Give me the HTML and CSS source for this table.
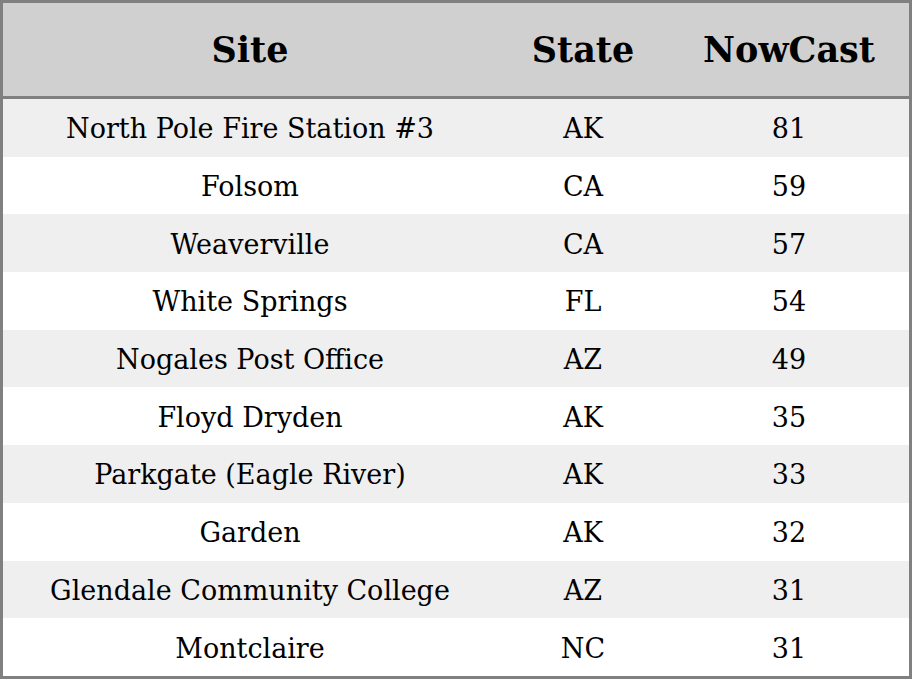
FILE: index.html
```html
<!DOCTYPE html>
<html>
<head>
<meta charset="utf-8">
<link rel="stylesheet" href="styles.css">
</head>
<body>
<table class="aq">
  <colgroup>
    <col class="c-site">
    <col class="c-state">
    <col class="c-now">
  </colgroup>
  <thead>
    <tr class="head"><th>Site</th><th>State</th><th>NowCast</th></tr>
  </thead>
  <tbody>
    <tr><td>North Pole Fire Station #3</td><td>AK</td><td>81</td></tr>
    <tr><td>Folsom</td><td>CA</td><td>59</td></tr>
    <tr><td>Weaverville</td><td>CA</td><td>57</td></tr>
    <tr><td>White Springs</td><td>FL</td><td>54</td></tr>
    <tr><td>Nogales Post Office</td><td>AZ</td><td>49</td></tr>
    <tr><td>Floyd Dryden</td><td>AK</td><td>35</td></tr>
    <tr><td>Parkgate (Eagle River)</td><td>AK</td><td>33</td></tr>
    <tr><td>Garden</td><td>AK</td><td>32</td></tr>
    <tr><td>Glendale Community College</td><td>AZ</td><td>31</td></tr>
    <tr><td>Montclaire</td><td>NC</td><td>31</td></tr>
  </tbody>
</table>
</body>
</html>
```
FILE: styles.css
```css
html, body {
  margin: 0;
  padding: 0;
  background: #ffffff;
}
.aq {
  width: 912px;
  height: 679px;
  border-collapse: separate;
  border-spacing: 0;
  border: 3px solid #808080;
  table-layout: fixed;
  font-family: "DejaVu Serif", serif;
  color: #000;
  box-sizing: border-box;
}
.c-site { width: 494px; }
.c-state { width: 172px; }
.c-now { width: 240px; }
.head th {
  background: #d0d0d0;
  height: 93px;
  padding: 0;
  font-size: 35px;
  font-weight: bold;
  text-align: center;
  vertical-align: middle;
  border-bottom: 3px solid #808080;
}
.aq td {
  padding: 2px 0 0 0;
  font-size: 27px;
  text-align: center;
  vertical-align: middle;
  height: 55.7px;
}
.aq tbody tr:nth-child(odd) td { background: #efefef; }
.aq tbody tr:nth-child(even) td { background: #ffffff; }
```
